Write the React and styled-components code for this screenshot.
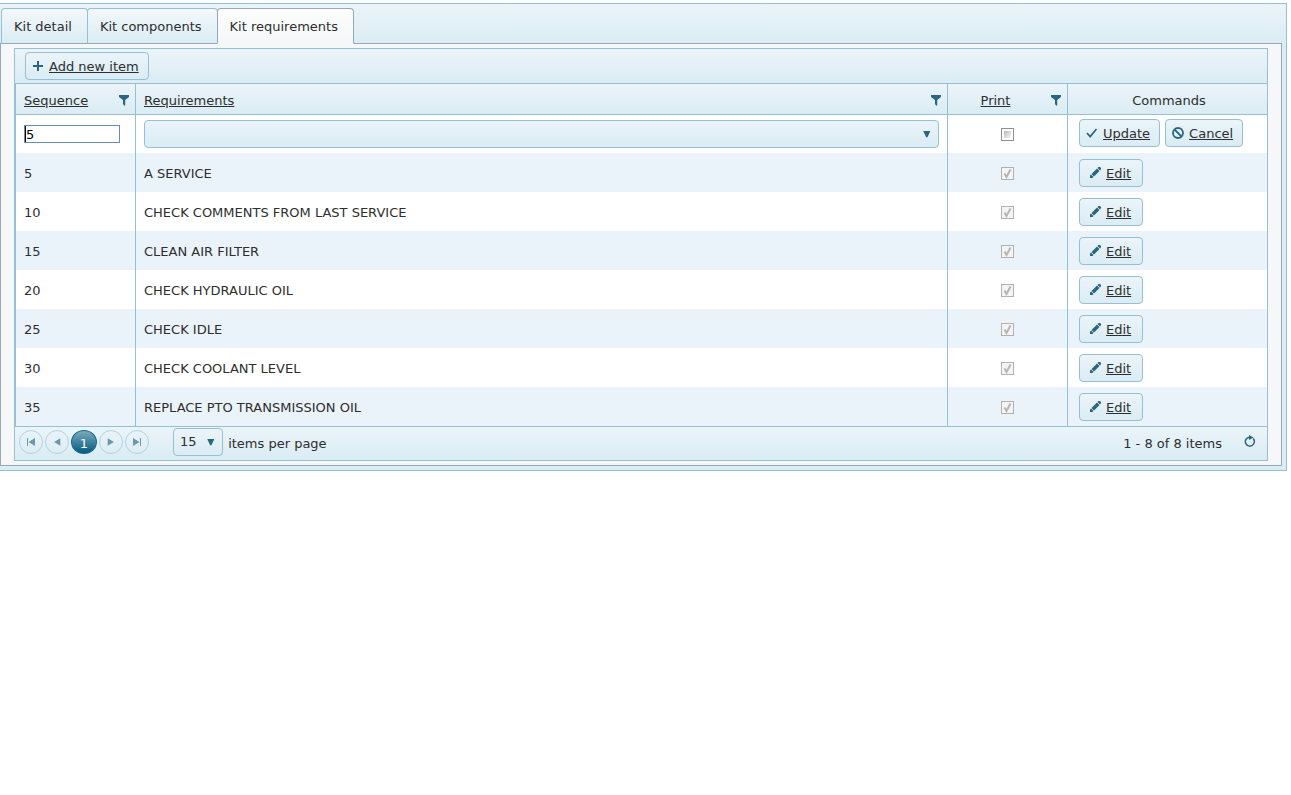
import { useState } from "react";
import styled, { createGlobalStyle } from "styled-components";

const GlobalStyle = createGlobalStyle`
  * {
    box-sizing: border-box;
  }

  body {
    margin: 0;
    background-color: #fff;
    color: #2e2e2e;
    font-family: Verdana, "DejaVu Sans", sans-serif;
    font-size: 13px;
    line-height: 20px;
  }

  button, input, select {
    margin: 0;
    color: inherit;
    font: inherit;
  }
`;

const StTabStrip = styled.main`
  margin: 3px 4px 0 0;
  padding: 4px 4px 4px 0;

  border: 1px solid #94c0d2;
  border-left: none;
  background: #daecf4 linear-gradient(#ebf4f9, #daecf4 40px) no-repeat;
`;

const StTabs = styled.div`
  display: flex;
  padding-left: 1px;
`;

const StTab = styled.button`
  position: relative;
  height: 36px;
  margin-right: -1px;
  margin-bottom: -1px;
  padding: 2px 15px 0 12px;

  border: 1px solid ${({ $active }) => ($active ? "#94a9b5" : "#94c0d2")};
  border-bottom-color: ${({ $active }) => ($active ? "#f5f7f8" : "#94a9b5")};
  border-radius: 4px 4px 0 0;
  background: ${({ $active }) =>
    $active
      ? "linear-gradient(#fcfdfd, #f5f7f8)"
      : "linear-gradient(#f3f8fb, #daecf4)"};
`;

const StContent = styled.section`
  padding: 4px 13px;

  border: 1px solid #94a9b5;
  background-color: #f5f7f8;
`;

const StGrid = styled.div`
  border: 1px solid #94c0d2;
  background-color: #fff;
`;

const StToolbar = styled.div`
  display: flex;
  align-items: center;
  height: 35px;
  padding: 0 10px;

  border-bottom: 1px solid #94c0d2;
  background: linear-gradient(#ebf4f9, #daecf4);
`;

const StButton = styled.button`
  display: inline-flex;
  align-items: center;
  height: 28px;
  margin-right: 5px;
  padding: ${({ $indent }) => ($indent ? "2px 11px 0 9px" : "2px 9px 0 6px")};
  gap: 5px;

  border: 1px solid #94c0d2;
  border-radius: 4px;
  background: linear-gradient(#ebf4f9, #daecf4);
  text-decoration: underline;

  & svg {
    margin-bottom: 3px;
  }
`;

const StTable = styled.table`
  width: 100%;
  table-layout: fixed;
  border-collapse: separate;
  border-spacing: 0;

  & th, & td {
    height: 39px;
    padding: 2px 8px 0;
    border-left: 1px solid #94c0d2;
    text-align: left;
    font-weight: normal;
  }
  & th {
    height: 31px;
    padding: 3px 5px 0 8px;
    border-bottom: 1px solid #94c0d2;
    background: linear-gradient(#ebf4f9, #daecf4);
  }
  & a {
    color: inherit;
  }
  & tbody tr:nth-child(even) {
    background-color: #eaf3f9;
  }
  & tbody tr:first-child td {
    height: 38px;
    padding-top: 0;
  }
`;

const StHeadCell = styled.div`
  display: flex;
  align-items: center;
  gap: 15px;

  & a, & span {
    flex: 1;
    text-align: ${({ $center }) => ($center ? "center" : "left")};
  }
`;

const StFilter = styled.button`
  display: flex;
  padding: 0 0 2px;
  border: none;
  background: none;
`;

const StPrintCell = styled.td`
  && {
    padding: 0;
    text-align: center;
  }
`;

const StCommandCell = styled.td`
  ${StTable} tbody tr & {
    padding: 2px 0 0 11px;
    font-size: 0;
  }
  & button {
    font-size: 13px;
  }
`;

const StNumberInput = styled.input`
  display: block;
  width: 96px;
  height: 18px;
  padding: 2px 0 0 1px;

  border: 1px solid #6a8cb8;
  background-color: #fff;
  box-shadow: inset 1px 0 #000;
  color: #000;
  outline: none;
`;

const StCheckbox = styled.span`
  position: relative;
  display: inline-flex;
  vertical-align: top;
  margin-top: 4px;

  & input {
    appearance: none;
    width: 13px;
    height: 13px;
    padding: 2px;

    border: 1px solid #8e8f8f;
    background: linear-gradient(135deg, #b4bac4, #f8f8f8) content-box #f4f4f4;
  }
  & input:disabled {
    border-color: #b1b1b1;
    background: #f4f4f4;
  }
  & svg {
    position: absolute;
    inset: 0;
    pointer-events: none;
  }
`;

const StSelect = styled.span`
  position: relative;
  display: ${({ $full }) => ($full ? "block" : "inline-block")};

  & select {
    appearance: none;
    display: block;
    width: ${({ $full }) => ($full ? "100%" : "50px")};
    height: 28px;
    padding: 0 6px;

    border: 1px solid #94c0d2;
    border-radius: 4px;
    background: linear-gradient(#ebf4f9, #daecf4);
  }
  & svg {
    position: absolute;
    top: 9px;
    right: 7px;
    pointer-events: none;
  }
`;

const StPager = styled.footer`
  display: flex;
  align-items: center;
  height: 34px;
  padding: 0 11px 3px 4px;

  border-top: 1px solid #94c0d2;
  background: linear-gradient(#ebf4f9, #daecf4);

  & label {
    padding: 3px 0 0 1px;
  }
`;

const StPages = styled.nav`
  display: flex;
  gap: 2px;
  margin-right: 24px;
`;

const StPage = styled.button`
  display: flex;
  justify-content: center;
  align-items: center;
  width: ${({ $active }) => ($active ? "26px" : "24px")};
  height: 24px;
  padding: ${({ $active }) => ($active ? "3px 0 0" : "0")};

  border: 1px solid ${({ $active }) => ($active ? "#176a8c" : "#b2d2df")};
  border-radius: 50%;
  background: ${({ $active }) =>
    $active ? "linear-gradient(#7ba9bd, #065b80)" : "transparent"};
  color: #fff;
`;

const StInfo = styled.span`
  flex: 1;
  padding: 3px 22px 0 0;
  text-align: right;
`;

const paths = {
  plus: "M5 1h2v4h4v2H7v4H5V7H1V5h4z",
  pencil: "M1 12V9.5l1-1L4.5 11l-1 1zM2.5 8L8 2.5 10.5 5 5 10.5zM8.5 2l1-1H11l1 1v1l-1 1.5z",
  first: "M2 2h1v8H2zM10 2v8L3.5 6z",
  prev: "M10 1.5v9L2.5 6z",
  next: "M2 1.5v9L9.5 6z",
  last: "M2 2v8l6.5-4zM9 2h1v8H9z",
  filter: "M1 1h10v2L7.2 6v5.5H6L5 10V6L1 3z",
  down: "M1.5 2.5h8.5L6.5 10H5z",
};

function Icon({ name, color = "#2b667f", size = 12 }) {
  return (
    <svg width={size} height={size} viewBox="0 0 12 12" fill={color} aria-hidden="true">
      {name === "check" && (
        <path d="M1 6l3.2 3.6L10.5 2" fill="none" stroke={color} strokeWidth="1.7" />
      )}
      {name === "cancel" && (
        <g fill="none" stroke={color} strokeWidth="1.8">
          <circle cx="6" cy="6" r="5" />
          <path d="M2.5 2.5l7 7" />
        </g>
      )}
      {name === "refresh" && (
        <>
          <path d="M5 2.2A4.5 4.5 0 1 0 9.2 3.6" fill="none" stroke={color} strokeWidth="1.5" />
          <path d="M5 0l4.5 2.5L5 5z" />
        </>
      )}
      {paths[name] && <path d={paths[name]} />}
    </svg>
  );
}

const requirements = [
  { sequence: 5, text: "A SERVICE" },
  { sequence: 10, text: "CHECK COMMENTS FROM LAST SERVICE" },
  { sequence: 15, text: "CLEAN AIR FILTER" },
  { sequence: 20, text: "CHECK HYDRAULIC OIL" },
  { sequence: 25, text: "CHECK IDLE" },
  { sequence: 30, text: "CHECK COOLANT LEVEL" },
  { sequence: 35, text: "REPLACE PTO TRANSMISSION OIL" },
];

const tabs = ["Kit detail", "Kit components", "Kit requirements"];

function HeadCell({ title, center }) {
  return (
    <th>
      <StHeadCell $center={center}>
        <a href="#sort">{title}</a>
        <StFilter aria-label={`Filter ${title}`}>
          <Icon name="filter" />
        </StFilter>
      </StHeadCell>
    </th>
  );
}

function App() {
  const [active, setActive] = useState("Kit requirements");

  return (
    <>
      <GlobalStyle />
      <StTabStrip>
        <StTabs role="tablist">
          {tabs.map((tab) => (
            <StTab
              key={tab}
              role="tab"
              aria-selected={tab === active}
              $active={tab === active}
              onClick={() => setActive(tab)}
            >
              {tab}
            </StTab>
          ))}
        </StTabs>
        <StContent>
          <StGrid>
            <StToolbar>
              <StButton>
                <Icon name="plus" />
                Add new item
              </StButton>
            </StToolbar>
            <StTable>
              <colgroup>
                <col width="120" />
                <col />
                <col width="120" />
                <col width="200" />
              </colgroup>
              <thead>
                <tr>
                  <HeadCell title="Sequence" />
                  <HeadCell title="Requirements" />
                  <HeadCell title="Print" center />
                  <th>
                    <StHeadCell $center>
                      <span>Commands</span>
                    </StHeadCell>
                  </th>
                </tr>
              </thead>
              <tbody>
                <tr>
                  <td>
                    <StNumberInput aria-label="Sequence" defaultValue="5" />
                  </td>
                  <td>
                    <StSelect $full>
                      <select aria-label="Requirement" defaultValue="">
                        <option value=""></option>
                      </select>
                      <Icon name="down" size={10} />
                    </StSelect>
                  </td>
                  <StPrintCell>
                    <StCheckbox>
                      <input type="checkbox" aria-label="Print" />
                    </StCheckbox>
                  </StPrintCell>
                  <StCommandCell>
                    <StButton>
                      <Icon name="check" />
                      Update
                    </StButton>
                    <StButton>
                      <Icon name="cancel" />
                      Cancel
                    </StButton>
                  </StCommandCell>
                </tr>
                {requirements.map(({ sequence, text }) => (
                  <tr key={sequence}>
                    <td>{sequence}</td>
                    <td>{text}</td>
                    <StPrintCell>
                      <StCheckbox>
                        <input type="checkbox" aria-label={`Print ${text}`} checked disabled readOnly />
                        <svg width="13" height="13" viewBox="0 0 13 13" aria-hidden="true">
                          <path d="M3.5 6.5l2 3.5 4-7.5" fill="none" stroke="#b5b5b5" strokeWidth="2" />
                        </svg>
                      </StCheckbox>
                    </StPrintCell>
                    <StCommandCell>
                      <StButton $indent>
                        <Icon name="pencil" />
                        Edit
                      </StButton>
                    </StCommandCell>
                  </tr>
                ))}
              </tbody>
            </StTable>
            <StPager>
              <StPages aria-label="Pages">
                <StPage aria-label="First page">
                  <Icon name="first" color="#6b98ac" />
                </StPage>
                <StPage aria-label="Previous page">
                  <Icon name="prev" color="#6b98ac" size={10} />
                </StPage>
                <StPage $active>1</StPage>
                <StPage aria-label="Next page">
                  <Icon name="next" color="#6b98ac" size={10} />
                </StPage>
                <StPage aria-label="Last page">
                  <Icon name="last" color="#6b98ac" />
                </StPage>
              </StPages>
              <StSelect>
                <select id="page-size" defaultValue="15">
                  <option>15</option>
                  <option>30</option>
                </select>
                <Icon name="down" size={10} />
              </StSelect>
              <label htmlFor="page-size">&nbsp;items per page</label>
              <StInfo>1 - 8 of 8 items</StInfo>
              <StFilter aria-label="Refresh">
                <Icon name="refresh" />
              </StFilter>
            </StPager>
          </StGrid>
        </StContent>
      </StTabStrip>
    </>
  );
}

export default App;
